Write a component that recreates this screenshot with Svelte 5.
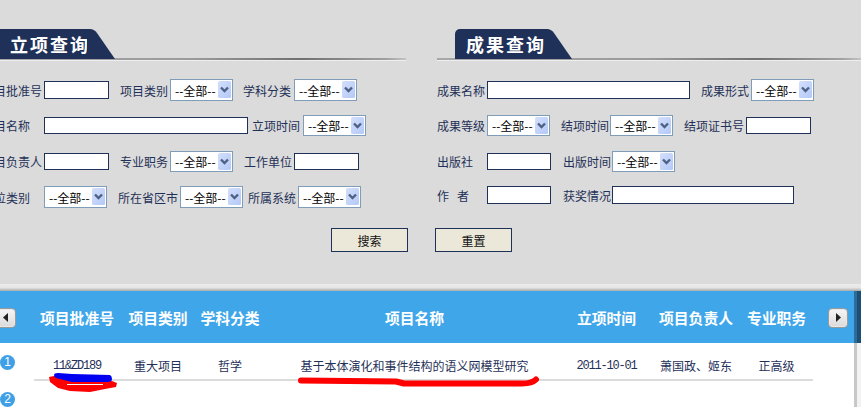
<script>
  const head = ['项目批准号', '项目类别', '学科分类', '项目名称', '立项时间', '项目负责人', '专业职务'];
</script>

{#snippet pick()}
  <span class="pick">
    <select><option>--全部--</option></select>
    <svg class="drop" width="13" height="17" viewBox="0 0 13 17">
      <defs>
        <linearGradient id="dropfill" x1="0" y1="0" x2="1" y2="1">
          <stop offset="0" stop-color="#d3dffb" />
          <stop offset="1" stop-color="#b4c9f8" />
        </linearGradient>
      </defs>
      <rect width="13" height="17" rx="1.500" fill="url(#dropfill)" />
      <path d="M3 6.500l3.500 3.500L10 6.500" fill="none" stroke="#4d6185" stroke-width="2.400" />
    </svg>
  </span>
{/snippet}

{#snippet heading(text, mark)}
  <div class="heading {mark}">
    <h2>{text}</h2>
    <svg class="tail" width="28" height="30" viewBox="0 0 28 30"><path d="M0 0h3q4 0 7 4L28 30H0z" fill="#1f3158" /></svg>
  </div>
{/snippet}

<main class="page">
  <section class="filters">
    <div class="col left">
      {@render heading('立项查询', 'clip')}
      <div class="row r1">
        <label class="w62">项目批准号</label><input class="s" />
        <label class="w50 ml11">项目类别</label>{@render pick()}
        <label class="w51 ml10">学科分类</label>{@render pick()}
      </div>
      <div class="row r2">
        <label class="w62">项目名称</label><input class="m" />
        <label class="w51 ml4">立项时间</label>{@render pick()}
      </div>
      <div class="row r3">
        <label class="w62">项目负责人</label><input class="s" />
        <label class="w50 ml11">专业职务</label>{@render pick()}
        <label class="w50 ml11">工作单位</label><input class="s" />
      </div>
      <div class="row r4">
        <label class="w62">单位类别</label>{@render pick()}
        <label class="w62 ml11">所在省区市</label>{@render pick()}
        <label class="w50 ml5">所属系统</label>{@render pick()}
      </div>
    </div>

    <div class="col right">
      {@render heading('成果查询', 'inset')}
      <div class="row r1">
        <label class="w50">成果名称</label><input class="n" />
        <label class="w50 ml11">成果形式</label>{@render pick()}
      </div>
      <div class="row r2">
        <label class="w50">成果等级</label>{@render pick()}
        <label class="w49 ml11">结项时间</label>{@render pick()}
        <label class="w62 ml11">结项证书号</label><input class="s" />
      </div>
      <div class="row r3">
        <label class="w50">出版社</label><input class="t" />
        <label class="w49 ml12">出版时间</label>{@render pick()}
      </div>
      <div class="row r4">
        <label class="w50">作&nbsp;&nbsp;&nbsp;者</label><input class="t" />
        <label class="w49 ml12">获奖情况</label><input class="l" />
      </div>
    </div>
  </section>

  <div class="actions">
    <button>搜索</button>
    <button>重置</button>
  </div>

  <div class="divider"></div>

  <section class="results">
    <div class="thead">
      <button class="nudge prev" aria-label="上一页">
        <svg width="6" height="9" viewBox="0 0 6 9"><path d="M5 0v9L0 4.500z" fill="#222" /></svg>
      </button>
      <div class="cols">
        {#each head as h}<span>{h}</span>{/each}
      </div>
      <button class="nudge next" aria-label="下一页">
        <svg width="6" height="9" viewBox="0 0 6 9"><path d="M1 0v9l5-4.500z" fill="#222" /></svg>
      </button>
    </div>

    <div class="tbody">
      <div class="rank one">1</div>
      <div class="cols line">
        <span class="latin">11&amp;ZD189</span>
        <span>重大项目</span>
        <span>哲学</span>
        <span>基于本体演化和事件结构的语义网模型研究</span>
        <span class="latin">2011-10-01</span>
        <span>萧国政、姬东</span>
        <span>正高级</span>
      </div>
      <div class="rank two">2</div>
    </div>

    <div class="scrollbar">
      <div class="bar-top"></div>
      <div class="bar-bottom"></div>
    </div>

    <!-- hand drawn marks on top of the screenshot -->
    <svg class="marks" width="861" height="407" viewBox="0 0 861 407">
      <path d="M49 377l5-1 58 5 5 2-1 4-11 2-15 3-20-1-12-3-8-6z" fill="#ff0000" />
      <path d="M67 384.500h36" stroke="#fff" stroke-width="1" />
      <path d="M54 375q0-2 4-2l14 1 38 1q2 1 2 4t-4 3H72l-12-3q-6-1-6-4z" fill="#0000f0" />
      <path d="M301 380.500l95 1 8 2h118q10 0 14-4" fill="none" stroke="#ff0000" stroke-width="6" stroke-linecap="round" stroke-linejoin="round" />
    </svg>
  </section>
</main>

<style>
  :global(body) {
    margin: 0;
  }

  .page {
    position: relative;
    width: 861px;
    height: 407px;
    overflow: hidden;
    background: #dbdbdb;
    font: 12px "Noto Sans CJK SC", "Liberation Sans", sans-serif;
    color: #1f3158;
  }

  .filters {
    display: flex;
    padding-top: 29px;
  }

  .col {
    flex: none;
  }

  .left {
    width: 424px;
    margin-left: -18px;
  }

  .right {
    width: 424px;
    margin-left: 31px;
  }

  .heading {
    display: flex;
    box-sizing: border-box;
    height: 31px;
    border-bottom: 2px solid #8e8e8e;
    border-image: linear-gradient(to right, #a8a8a8, #9a9a9a 50%, #707070 75%, #a0a0a0 95%, #c4c4c4) 1;
    box-shadow: 0 1px 0 #eeeeee;
    margin-bottom: 19px;
  }

  .heading h2 {
    flex: none;
    box-sizing: content-box;
    margin: 0;
    height: 30px;
    background: #1f3158;
    color: #fff;
    font-size: 18px;
    font-weight: 700;
    line-height: 31px;
    letter-spacing: 2px;
    white-space: nowrap;
  }

  .heading.clip h2 {
    padding-left: 28px;
    width: 77px;
  }

  .heading.inset {
    padding-left: 18px;
  }

  .heading.inset h2 {
    border-radius: 5px 0 0 0;
    padding-left: 11px;
    width: 78px;
  }

  .tail {
    flex: none;
  }

  .row {
    display: flex;
    align-items: center;
    height: 22px;
  }

  .r2 {
    height: 21px;
    margin-top: 14px;
  }

  .r3 {
    height: 21px;
    margin-top: 15px;
  }

  .r4 {
    margin-top: 14px;
  }

  .right .r4 {
    margin-top: 12px;
  }

  label {
    flex: none;
    white-space: nowrap;
  }

  .w49 { width: 49px; }
  .w50 { width: 50px; }
  .w51 { width: 51px; }
  .w62 { width: 62px; }
  .ml4 { margin-left: 4px; }
  .ml5 { margin-left: 5px; }
  .ml10 { margin-left: 10px; }
  .ml11 { margin-left: 11px; }
  .ml12 { margin-left: 12px; }

  input {
    flex: none;
    box-sizing: border-box;
    height: 18px;
    border: 1px solid #1f3158;
    background: #fff;
    padding: 0;
  }

  .r2 input,
  .r3 input {
    height: 17px;
  }

  input.s { width: 65px; }
  input.t { width: 64px; }
  input.m { width: 204px; }
  input.n { width: 203px; }
  input.l { width: 182px; }

  .pick {
    position: relative;
    flex: none;
    width: 63px;
    height: 100%;
  }

  select {
    display: block;
    box-sizing: border-box;
    width: 100%;
    height: 100%;
    appearance: none;
    border: 1px solid #7f9db9;
    border-radius: 0;
    background: #fff;
    padding: 0 0 0 4px;
    color: #000;
    font: 12px "Noto Sans CJK SC", sans-serif;
  }

  .drop {
    position: absolute;
    top: 2px;
    right: 2px;
    pointer-events: none;
  }

  .actions {
    display: flex;
    gap: 27px;
    margin: 20px 0 0 331px;
  }

  .actions button {
    width: 77px;
    height: 24px;
    padding: 0;
    border: 1px solid #1f3158;
    background: #ebe8d9;
    color: #111;
    font: 12px "Noto Sans CJK SC", sans-serif;
  }

  .divider {
    height: 11px;
    margin-top: 28px;
    background: linear-gradient(#dbdbdb, #dbdbdb 35%, #ebebeb 40%, #e6e6e6 70%, #a9a9a9);
  }

  .thead {
    display: flex;
    align-items: center;
    height: 52px;
    background: #3fa6ea;
    color: #fff;
    font-size: 14.800px;
    font-weight: 700;
  }

  .cols {
    flex: none;
    display: grid;
    grid-template-columns: 86px 76px 68px 301px 83px 96px 65px;
    width: 775px;
    margin-left: 18px;
    white-space: nowrap;
  }

  .cols span {
    text-align: center;
  }

  .nudge {
    flex: none;
    display: flex;
    align-items: center;
    justify-content: center;
    box-sizing: border-box;
    width: 20px;
    height: 20px;
    margin-top: 1px;
    padding: 0;
    border: 1px solid #9a9a9a;
    border-radius: 4px;
    background: linear-gradient(#f6f6f6, #dadada);
    box-shadow: inset 0 0 0 1px #e8e8e8;
  }

  .prev {
    margin-left: -4px;
  }

  .next {
    margin-left: 19px;
  }

  .tbody {
    position: relative;
    height: 64px;
    background: #fff;
    font-size: 12px;
  }

  .tbody .cols {
    width: 779px;
    margin-left: 34px;
    padding: 14px 0 4px;
    border-bottom: 2px solid #dcdcdc;
    line-height: 18px;
  }

  .cols .latin {
    font: 12px/18px "Liberation Mono", monospace;
    letter-spacing: -1.200px;
  }

  .rank {
    position: absolute;
    left: 0;
    width: 15px;
    height: 15px;
    border-radius: 50%;
    background: #3fa0e6;
    color: #fff;
    font: 12px/15px "Liberation Sans", sans-serif;
    text-align: center;
  }

  .one { top: 12px; }
  .two { top: 49px; }

  .scrollbar {
    position: absolute;
    top: 291px;
    right: 0;
    width: 7px;
    height: 116px;
    display: flex;
    flex-direction: column;
  }

  .bar-top {
    height: 52px;
    background: linear-gradient(to right, #2d6d9d 50%, #1e4f75 50%);
  }

  .bar-bottom {
    flex: 1;
    background: linear-gradient(to right, #c8c8c8 50%, #f2f2f2 50%);
  }

  .marks {
    position: absolute;
    top: 0;
    left: 0;
    pointer-events: none;
  }
</style>
